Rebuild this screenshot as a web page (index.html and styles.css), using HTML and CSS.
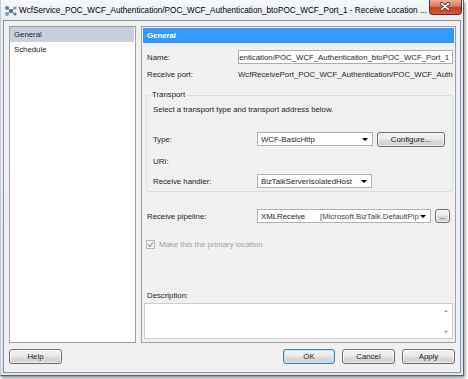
FILE: index.html
```html
<!DOCTYPE html>
<html lang="en">

<head>
  <meta charset="UTF-8" />
  <title>Receive Location Properties</title>
  <link rel="stylesheet" href="styles.css">
</head>

<body>

  <div class="window">
    <!-- Title bar -->
    <div class="titlebar">
      <svg class="app-icon" width="13" height="12" viewBox="0 0 13 12">
        <path d="M3 3 L7 6 L3 9 M7 6 L11 3 M7 6 L11 9" stroke="#7d8894" stroke-width="1" fill="none" />
        <circle cx="3" cy="3" r="2" fill="#5f7fa3" />
        <circle cx="3" cy="9" r="2" fill="#8a96a2" />
        <circle cx="7" cy="6" r="2" fill="#4d6c90" />
        <circle cx="11" cy="3" r="1.6" fill="#8a96a2" />
        <circle cx="11" cy="9" r="1.6" fill="#5f7fa3" />
      </svg>
      <span class="title">WcfService_POC_WCF_Authentication/POC_WCF_Authentication_btoPOC_WCF_Port_1 - Receive Location ...</span>
      <div class="close">
        <svg width="33" height="15" viewBox="0 0 33 15">
          <path d="M13 3.5 L20 9.5 M20 3.5 L13 9.5" stroke="#6b2417" stroke-width="3.4" stroke-linecap="round" />
          <path d="M13 3.5 L20 9.5 M20 3.5 L13 9.5" stroke="#ffffff" stroke-width="1.8" stroke-linecap="round" />
        </svg>
      </div>
    </div>

    <div class="client">
      <div class="main">
        <!-- Page list -->
        <ul class="nav">
          <li class="selected">General</li>
          <li>Schedule</li>
        </ul>

        <!-- General page -->
        <div class="page">
          <div class="page-header">General</div>
          <div class="page-body">
            <div class="row name-row">
              <span class="label label-narrow">Name:</span>
              <div class="textbox"><span>entication/POC_WCF_Authentication_btoPOC_WCF_Port_1</span></div>
            </div>
            <div class="row port-row">
              <span class="label label-narrow">Receive port:</span>
              <span class="value">WcfReceivePort_POC_WCF_Authentication/POC_WCF_Auth</span>
            </div>

            <fieldset class="group">
              <legend>Transport</legend>
              <div class="row hint-row">Select a transport type and transport address below.</div>
              <div class="row type-row">
                <span class="label label-group">Type:</span>
                <div class="combo combo-type"><span>WCF-BasicHttp</span><i class="arrow"></i></div>
                <button class="btn btn-configure">Configure...</button>
              </div>
              <div class="row uri-row">
                <span class="label label-group">URI:</span>
              </div>
              <div class="row handler-row">
                <span class="label label-group">Receive handler:</span>
                <div class="combo combo-handler"><span>BizTalkServerIsolatedHost</span><i class="arrow"></i></div>
              </div>
            </fieldset>

            <div class="row pipeline-row">
              <span class="label label-wide">Receive pipeline:</span>
              <div class="combo combo-pipeline">
                <span class="pipe-name">XMLReceive</span>
                <span class="pipe-type">[Microsoft.BizTalk.DefaultPip</span>
                <i class="arrow"></i>
              </div>
              <button class="btn btn-dots">...</button>
            </div>

            <div class="row check-row">
              <span class="checkbox">
                <svg width="7" height="7" viewBox="0 0 7 7">
                  <path d="M1 3.5 L3 5.5 L6 1" stroke="#9c9c9c" stroke-width="1.2" fill="none" />
                </svg>
              </span>
              <span class="check-label">Make this the primary location</span>
            </div>

            <div class="row desc-row">Description:</div>
            <div class="textarea">
              <div class="text"></div>
              <div class="scrollbar">
                <i class="up"></i>
                <i class="down"></i>
              </div>
            </div>
          </div>
        </div>
      </div>

      <div class="footer">
        <button class="btn">Help</button>
        <div class="actions">
          <button class="btn btn-ok">OK</button>
          <button class="btn">Cancel</button>
          <button class="btn">Apply</button>
        </div>
      </div>
    </div>
  </div>

</body>

</html>
```

FILE: styles.css
```css
html,
body {
  margin: 0;
}

body {
  background: #ffffff;
  font-family: "Liberation Sans", Arial, sans-serif;
  font-size: 7.8px;
  color: #1e1e1e;
  width: 468px;
  height: 379px;
  overflow: hidden;
}

.window {
  width: 464px;
  height: 376px;
  box-sizing: border-box;
  border: 1px solid #5b6670;
  border-top: none;
  border-left-color: #c3cbd4;
  background: linear-gradient(#f6f8fb, #e7ecf2 20px, #dde4ec);
  box-shadow: 1px 2px 3px rgba(0, 0, 0, 0.45);
  padding: 0 2px 2px 2px;
  display: flex;
  flex-direction: column;
}

/* Title bar */
.titlebar {
  height: 20px;
  display: flex;
  align-items: center;
}

.app-icon {
  margin-left: 1px;
  margin-top: 1px;
  flex-shrink: 0;
}

.title {
  margin-left: 2px;
  font-size: 8.2px;
  color: #000;
  white-space: nowrap;
}

.close {
  align-self: flex-start;
  margin-left: auto;
  margin-right: -1px;
  width: 33px;
  height: 15px;
  box-sizing: border-box;
  border: 1px solid #7e2a1c;
  border-top: none;
  border-radius: 0 0 4px 4px;
  background: linear-gradient(#eab0a2, #d77762 45%, #c2401f 55%, #d65a3c);
  display: flex;
  align-items: center;
  justify-content: center;
}

.close svg {
  margin-left: -1px;
}

/* Client area */
.client {
  flex: 1;
  background: #f0f0f0;
  border: 1px solid #8d96a1;
  padding: 5px 4px 8px 5px;
  display: flex;
  flex-direction: column;
}

.main {
  display: flex;
  gap: 5px;
  height: 317px;
}

.nav {
  width: 127px;
  margin: 0;
  padding: 0;
  list-style: none;
  box-sizing: border-box;
  border: 1px solid #a0a0a0;
  background: #ffffff;
}

.nav li {
  height: 15px;
  line-height: 15px;
  padding-left: 4px;
  margin-right: 1px;
}

.nav li.selected {
  background: #c6d1dd;
}

.page {
  width: 315px;
  box-sizing: border-box;
  border: 1px solid #a0a0a0;
  background: #f0f0f0;
  display: flex;
  flex-direction: column;
}

.page-header {
  height: 15px;
  line-height: 15px;
  margin: 1px 1px 0 1px;
  padding-left: 4px;
  background: #3399ff;
  color: #ffffff;
  font-weight: bold;
}

.page-body {
  padding: 0 2px 0 5px;
}

.row {
  display: flex;
  align-items: center;
  white-space: nowrap;
}

.label {
  flex-shrink: 0;
}

.label-narrow {
  width: 91px;
}

.label-wide {
  width: 110px;
}

.label-group {
  width: 104px;
}

.name-row {
  margin-top: 7px;
  height: 14px;
}

.textbox {
  flex: 1;
  height: 14px;
  box-sizing: border-box;
  border: 1px solid #abadb3;
  background: #ffffff;
  padding-right: 3px;
  display: flex;
  align-items: center;
  justify-content: flex-end;
  overflow: hidden;
}

.textbox span {
  flex-shrink: 0;
}

.port-row {
  margin-top: 4px;
  height: 12px;
}

.port-row .value {
  flex: 1;
  overflow: hidden;
}

/* Transport group */
.group {
  margin: 9px 0 0 -1px;
  padding: 2px 6px 3px 6px;
  border: 1px solid #d5dfe5;
  border-radius: 3px;
}

.group legend {
  padding: 0 1px;
  margin-left: -2px;
  line-height: 12px;
}

.hint-row {
  height: 12px;
}

.type-row {
  margin-top: 17px;
  height: 15px;
}

.uri-row {
  margin-top: 8px;
  height: 12px;
}

.handler-row {
  margin-top: 7px;
  height: 14px;
}

/* Combo boxes */
.combo {
  height: 14px;
  box-sizing: border-box;
  border: 1px solid #acb3bb;
  background: #ffffff;
  padding-left: 3px;
  display: flex;
  align-items: center;
  overflow: hidden;
  flex-shrink: 0;
}

.combo .arrow {
  margin-left: auto;
  margin-right: 4px;
  flex-shrink: 0;
  width: 0;
  height: 0;
  border-left: 3px solid transparent;
  border-right: 3px solid transparent;
  border-top: 3px solid #000;
}

.combo-type {
  width: 116px;
}

.combo-handler {
  width: 115px;
}

.combo-pipeline {
  width: 174px;
}

.pipe-name {
  width: 59px;
  flex-shrink: 0;
}

.pipe-type {
  color: #444;
}

/* Buttons */
.btn {
  font-family: "Liberation Sans", Arial, sans-serif;
  font-size: 7.8px;
  color: #1e1e1e;
  width: 53px;
  height: 15px;
  padding: 0;
  box-sizing: border-box;
  border: 1px solid #707070;
  border-radius: 3px;
  background: linear-gradient(#f2f2f2, #ebebeb 49%, #dddddd 51%, #cfcfcf);
  box-shadow: inset 0 0 0 1px rgba(255, 255, 255, 0.6);
}

.btn-configure {
  width: 68px;
  margin-left: 4px;
  align-self: flex-start;
}

.type-row .combo {
  align-self: flex-start;
}

.btn-dots {
  width: 15px;
  height: 14px;
  margin-left: 4px;
  flex-shrink: 0;
}

.btn-ok {
  width: 52px;
  border-color: #3c7fb1;
  box-shadow: inset 0 0 0 1px #c4e5f6;
}

.pipeline-row {
  margin-top: 17px;
  height: 14px;
}

/* Primary location checkbox */
.check-row {
  margin-top: 15px;
  margin-left: -1px;
  height: 12px;
}

.checkbox {
  width: 9px;
  height: 9px;
  box-sizing: border-box;
  border: 1px solid #b8b8b8;
  background: #f4f4f4;
  display: flex;
  align-items: center;
  justify-content: center;
}

.check-label {
  margin-left: 4px;
  color: #a3a3a3;
}

.desc-row {
  margin-top: 39px;
  height: 12px;
}

.textarea {
  margin: 2px 0 0 -3px;
  height: 36px;
  box-sizing: border-box;
  border: 1px solid #c9cdd3;
  background: #ffffff;
  display: flex;
}

.textarea .text {
  flex: 1;
}

.scrollbar {
  width: 13px;
  display: flex;
  flex-direction: column;
  align-items: center;
  justify-content: space-between;
  padding: 6px 0 5px 0;
}

.scrollbar i {
  width: 0;
  height: 0;
  border-left: 2px solid transparent;
  border-right: 2px solid transparent;
}

.scrollbar .up {
  border-bottom: 2px solid #9a9a9a;
}

.scrollbar .down {
  border-top: 2px solid #9a9a9a;
}

/* Dialog buttons */
.footer {
  margin-top: 6px;
  height: 15px;
  display: flex;
  justify-content: space-between;
}

.actions {
  display: flex;
  gap: 7px;
  padding-right: 1px;
}
```
